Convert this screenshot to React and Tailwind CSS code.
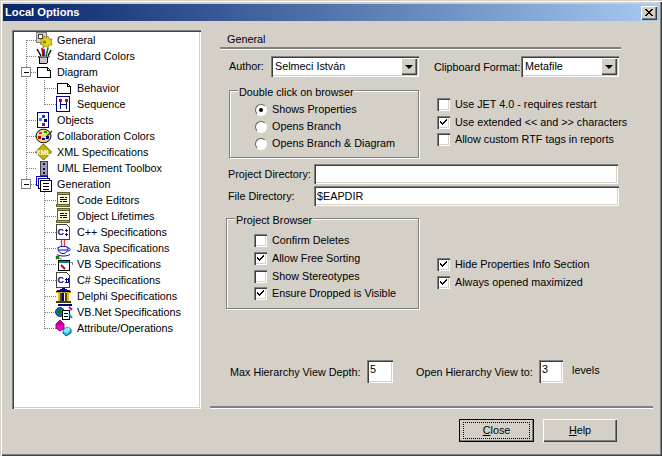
import React from 'react'

const sunken = 'bg-white shadow-[inset_1px_1px_0_#808080,inset_2px_2px_0_#404040,inset_-1px_-1px_0_#ffffff,inset_-2px_-2px_0_#d4d0c8]'
const raised = 'bg-[#d4d0c8] shadow-[inset_1px_1px_0_#ffffff,inset_-1px_-1px_0_#404040,inset_-2px_-2px_0_#808080]'

// 16x16 tree icons
const Ico = ({ children }) => (
  <svg width="16" height="16" viewBox="0 0 16 16" shapeRendering="crispEdges" className="shrink-0 overflow-visible">{children}</svg>
)

const PageIcon = () => (
  <Ico><path d="M1.5 3.5h10l3 3v7h-13z M11.5 3.5v3h3" fill="#fff" stroke="#000" /></Ico>
)

const icons = {
  general: (
    <Ico>
      <rect x="0.5" y="0.5" width="10" height="10" fill="#d4d0c8" stroke="#808080" />
      <rect x="2.500" y="2.500" width="4" height="4" fill="#fff" stroke="#404040" />
      <g transform="translate(0 3)">
        <path d="M8 1l2 2 2-2 1 3 3 0-1 3 1 3-3 0-1 3-2-2-3 2 0-3-3-1 2-2-2-3 3 0z" fill="#e6d020" stroke="#808000" strokeWidth="0.7" shapeRendering="auto" />
        <circle cx="8.5" cy="7" r="1.6" fill="#808000" shapeRendering="auto" />
      </g>
    </Ico>
  ),
  colors: (
    <Ico>
      <path d="M3 8.5h9l-1 7h-7z" fill="#c8c8c8" stroke="#000" />
      <path d="M2 8v1h11v-1z" fill="#fff" stroke="#000" strokeWidth="0.5" />
      <path d="M1 1l4 7" stroke="#000" strokeWidth="1.4" shapeRendering="auto" />
      <path d="M6 0l1 8" stroke="#d00000" strokeWidth="1.6" shapeRendering="auto" />
      <path d="M8 1v7" stroke="#0000c0" strokeWidth="1.6" shapeRendering="auto" />
      <path d="M12 0l-2 8" stroke="#008000" strokeWidth="1.6" shapeRendering="auto" />
      <path d="M15 2l-3 6" stroke="#000" strokeWidth="1.4" shapeRendering="auto" />
    </Ico>
  ),
  page: <PageIcon />,
  sequence: (
    <Ico>
      <rect x="0.5" y="0.5" width="13" height="15" fill="#fff" stroke="#000080" />
      <path d="M4 4v9M10 4v9M4 8h6" stroke="#000080" fill="none" />
      <rect x="3" y="3" width="3" height="3" fill="#d00000" />
      <rect x="9" y="3" width="3" height="3" fill="#d00000" />
    </Ico>
  ),
  objects: (
    <Ico>
      <rect x="1.5" y="0.5" width="11" height="15" fill="#fff" stroke="#000080" />
      <rect x="6" y="3" width="3" height="3" fill="#2040c0" />
      <rect x="3" y="6" width="3" height="3" fill="#4080e0" />
      <rect x="8" y="7" width="3" height="3" fill="#000080" />
      <rect x="6" y="11" width="3" height="3" fill="#a00080" />
    </Ico>
  ),
  palette: (
    <Ico>
      <ellipse cx="7.5" cy="8" rx="7.5" ry="6.8" fill="#e8e070" stroke="#000" shapeRendering="auto" />
      <rect x="3" y="4" width="3" height="2" fill="#ff00ff" />
      <rect x="8" y="3" width="3" height="2" fill="#00a000" />
      <rect x="2" y="8" width="3" height="3" fill="#d00000" />
      <rect x="6" y="10" width="3" height="2" fill="#0000e0" />
      <rect x="10" y="8" width="3" height="3" fill="#000080" />
      <path d="M16 3l-5 5" stroke="#404040" strokeWidth="1.5" shapeRendering="auto" />
    </Ico>
  ),
  xml: (
    <Ico>
      <path d="M7.5 0L15.5 8 7.5 16-.5 8z" fill="#c8b400" stroke="#606000" shapeRendering="auto" />
      <text x="7.5" y="10.5" textAnchor="middle" fontSize="7" fontWeight="700" fontFamily="Liberation Sans, sans-serif" fill="#fff">XML</text>
    </Ico>
  ),
  uml: (
    <Ico>
      <rect x="4.5" y="1.5" width="7" height="14" fill="#a0a0a8" stroke="#404040" />
      <rect x="7" y="3" width="2" height="2" fill="#000080" />
      <rect x="7" y="8" width="2" height="2" fill="#000080" />
      <rect x="7" y="12" width="2" height="2" fill="#000080" />
    </Ico>
  ),
  generation: (
    <Ico>
      <rect x="0.5" y="0.5" width="11" height="9" fill="#fff" stroke="#0000c0" />
      <rect x="2.5" y="2.5" width="11" height="10" fill="#fff" stroke="#000080" />
      <rect x="4.5" y="4.5" width="11" height="11" fill="#fff" stroke="#000" />
      <path d="M7 7h6M7 10h6M7 13h6" stroke="#000" />
    </Ico>
  ),
  code: (
    <Ico>
      <rect x="1.5" y="0.5" width="12" height="2" fill="#a8a860" stroke="#606030" />
      <rect x="1.5" y="2.5" width="12" height="10" fill="#ffffd8" stroke="#606030" />
      <path d="M4 5h4M9 5h2M4 7h7M4 9h2M7 9h4" stroke="#000" />
      <rect x="0.5" y="12.5" width="13" height="2" fill="#a8a860" stroke="#606030" />
    </Ico>
  ),
  cpp: (
    <Ico>
      <path d="M0.5 0.5h10l3 3v12h-13z" fill="#fff" stroke="#404040" />
      <text x="1.5" y="11" fontSize="9" fontWeight="700" fontFamily="Liberation Sans, sans-serif" fill="#000080">C</text>
      <path d="M9 6h3M10 5v3M9 10h3M10 9v3" stroke="#000080" />
    </Ico>
  ),
  java: (
    <Ico>
      <g transform="translate(0 2)">
        <path d="M6-2l-1 2 1 2-1 2M9-2l-1 2 1 2-1 2" fill="none" stroke="#e00000" shapeRendering="auto" />
        <path d="M2 5.5c3-1.500 8-1.500 10 0 0 4-2 6-5 6s-5-2-5-6z" fill="#fff" stroke="#0000c0" shapeRendering="auto" />
        <path d="M3 8h8M12 6c3 0 3 3 0 3M1 12.500c3 2 10 2 13 0" fill="none" stroke="#0000c0" shapeRendering="auto" />
      </g>
    </Ico>
  ),
  vb: (
    <Ico>
      <rect x="2.5" y="4.500" width="11" height="10" fill="#fff" stroke="#000" />
      <rect x="3" y="5" width="10" height="2" fill="#008080" />
      <path d="M0 0l3 3M3 0l-3 3" stroke="#006000" strokeWidth="1.500" shapeRendering="auto" />
      <path d="M3 1l3 3" stroke="#c0c000" strokeWidth="1.500" shapeRendering="auto" />
      <path d="M5 9l4 4" stroke="#d00000" strokeWidth="2" shapeRendering="auto" />
      <path d="M14 6l2 0v3" stroke="#808080" fill="none" />
    </Ico>
  ),
  csharp: (
    <Ico>
      <path d="M0.5 0.5h10l3 3v12h-13z" fill="#fff" stroke="#404040" />
      <text x="1.5" y="11" fontSize="9" fontWeight="700" fontFamily="Liberation Sans, sans-serif" fill="#000080">C</text>
      <path d="M9 7h4M9 10h4M10 6v5M12 6v5" stroke="#000080" />
    </Ico>
  ),
  delphi: (
    <Ico>
      <path d="M0 3L7.500 0 15 3v1H0z" fill="#000080" />
      <rect x="0" y="4" width="15" height="1" fill="#c8a000" />
      <rect x="2" y="5" width="2" height="8" fill="#e0c020" />
      <rect x="6" y="5" width="2" height="8" fill="#000080" />
      <rect x="11" y="5" width="2" height="8" fill="#e0c020" />
      <rect x="4" y="5" width="2" height="8" fill="#604000" />
      <rect x="9" y="5" width="2" height="8" fill="#604000" />
      <rect x="0" y="13" width="15" height="2" fill="#404000" />
    </Ico>
  ),
  vbnet: (
    <Ico>
      <rect x="2" y="0" width="14" height="2" fill="#000080" />
      <circle cx="4" cy="8" r="4.500" fill="#2060c0" stroke="#004080" shapeRendering="auto" />
      <path d="M2 6h3v3H2z" fill="#008000" />
      <rect x="6.500" y="6.500" width="7" height="9" fill="#fff" stroke="#000" />
      <path d="M8 9h4M8 12h4" stroke="#000" />
      <path d="M13 3l3 3" stroke="#c000c0" strokeWidth="2" shapeRendering="auto" />
      <path d="M13 10l3 4" stroke="#00a0a0" strokeWidth="2" shapeRendering="auto" />
    </Ico>
  ),
  attr: (
    <Ico>
      <g transform="translate(0 1)">
        <path d="M4-1L8 3 8 7 4 10 0 7 0 3z" fill="#ff00c0" stroke="#800060" shapeRendering="auto" />
        <path d="M4-1L8 3 4 6 0 3z" fill="#c000a0" shapeRendering="auto" />
        <path d="M11 6l4 2v4l-5 3-3-3v-3z" fill="#30b8e8" stroke="#006080" shapeRendering="auto" />
        <path d="M11 6l4 2-4 4-4-2z" fill="#90e8ff" shapeRendering="auto" />
      </g>
    </Ico>
  ),
}

const tree = [
  { label: 'General', icon: 'general' },
  { label: 'Standard Colors', icon: 'colors' },
  { label: 'Diagram', icon: 'page', box: true },
  { label: 'Behavior', icon: 'page', sub: true },
  { label: 'Sequence', icon: 'sequence', sub: true, lastSub: true },
  { label: 'Objects', icon: 'objects' },
  { label: 'Collaboration Colors', icon: 'palette' },
  { label: 'XML Specifications', icon: 'xml' },
  { label: 'UML Element Toolbox', icon: 'uml' },
  { label: 'Generation', icon: 'generation', box: true, last: true },
  { label: 'Code Editors', icon: 'code', sub: true, noMain: true },
  { label: 'Object Lifetimes', icon: 'code', sub: true, noMain: true },
  { label: 'C++ Specifications', icon: 'cpp', sub: true, noMain: true },
  { label: 'Java Specifications', icon: 'java', sub: true, noMain: true },
  { label: 'VB Specifications', icon: 'vb', sub: true, noMain: true },
  { label: 'C# Specifications', icon: 'csharp', sub: true, noMain: true },
  { label: 'Delphi Specifications', icon: 'delphi', sub: true, noMain: true },
  { label: 'VB.Net Specifications', icon: 'vbnet', sub: true, noMain: true },
  { label: 'Attribute/Operations', icon: 'attr', sub: true, noMain: true, lastSub: true },
]

const dots = { stroke: '#808080', strokeDasharray: '1 1', fill: 'none' }

function TreeRow({ item, index }) {
  const width = item.sub ? 42 : 22
  return (
    <div className="flex h-4 items-center">
      <svg width={width} height="16" shapeRendering="crispEdges" className="shrink-0">
        {!item.noMain && (
          <path d={item.last ? 'M12.500 0v8' : index === 0 ? 'M12.500 8v8' : 'M12.500 0v16'} {...dots} />
        )}
        {item.sub ? (
          <>
            <path d={item.lastSub ? 'M30.500 0v8.500' : 'M30.500 0v16'} {...dots} />
            <path d="M31 8.500h11" {...dots} />
          </>
        ) : (
          <path d="M13 8.500h9" {...dots} />
        )}
        {item.box && (
          <>
            <rect x="7.500" y="3.500" width="9" height="9" fill="#fff" stroke="#808080" />
            <path d="M10 8.500h5" stroke="#000" />
          </>
        )}
      </svg>
      {icons[item.icon]}
      <span className="ml-[5px] whitespace-nowrap">{item.label}</span>
    </div>
  )
}

function Combo({ value, className }) {
  return (
    <div className={`${sunken} flex h-[21px] items-center p-[2px] ${className}`}>
      <span className="flex-1 pl-[2px]">{value}</span>
      <div className={`${raised} flex h-[17px] w-4 items-center justify-center`}>
        <div className="h-0 w-0 border-x-[4px] border-t-[4px] border-x-transparent border-t-black" />
      </div>
    </div>
  )
}

function Check({ label, checked, className = '' }) {
  return (
    <div className={`flex h-[17px] items-center ${className}`}>
      <div className={`${sunken} flex h-[13px] w-[13px] shrink-0 items-center justify-center`}>
        {checked && (
          <svg width="7" height="7" viewBox="0 0 7 7" shapeRendering="crispEdges"><path d="M0 2h1v1h1v1h1V3h1V2h1V1h1V0h1v2H6v1H5v1H4v1H3v1H2V5H1V4H0z" /></svg>
        )}
      </div>
      <span className="ml-[5px] whitespace-nowrap">{label}</span>
    </div>
  )
}

function Radio({ label, checked, className = '' }) {
  return (
    <div className={`flex h-[17px] items-center ${className}`}>
      <div className="flex h-3 w-3 shrink-0 items-center justify-center rounded-full border border-t-[#606060] border-l-[#606060] border-r-white border-b-white bg-white">
        {checked && <div className="h-1 w-1 rounded-full bg-black" />}
      </div>
      <span className="ml-[5px] whitespace-nowrap">{label}</span>
    </div>
  )
}

function Group({ title, className, children }) {
  return (
    <div className={`relative border border-[#808080] shadow-[1px_1px_0_#ffffff,inset_1px_1px_0_#ffffff] ${className}`}>
      <span className="absolute top-[-6px] left-2 bg-[#d4d0c8] px-[1px] leading-[14px] whitespace-nowrap">{title}</span>
      {children}
    </div>
  )
}

function Button({ label, focused }) {
  const [first, ...rest] = label
  return (
    <div className={`${raised} flex h-[23px] items-center justify-center ${focused ? 'w-[75px] outline outline-1 -outline-offset-1 outline-black' : 'w-[74px]'}`}>
      <span className={`${focused ? 'flex h-[17px] w-[67px] items-center justify-center border border-dotted border-black' : ''}`}>
        <span className="underline">{first}</span>{rest.join('')}
      </span>
    </div>
  )
}

export default function App() {
  return (
    <div className="h-[456px] w-[662px] overflow-hidden bg-[#d4d0c8] p-[4px] font-['Liberation_Sans',sans-serif] text-[10.800px] leading-none text-black shadow-[inset_1px_1px_0_#d4d0c8,inset_2px_2px_0_#ffffff,inset_-1px_-1px_0_#404040,inset_-2px_-2px_0_#808080]">
      {/* title bar */}
      <div className="-mx-px flex h-[17px] items-center justify-between bg-gradient-to-r from-[#0a246a] to-[#a6caf0] pr-[2px] pl-[2px]">
        <span className="text-[11.200px] font-bold text-white">Local Options</span>
        <div className={`${raised} flex h-[14px] w-4 items-center justify-center`}>
          <svg width="8" height="7" viewBox="0 0 8 7" shapeRendering="crispEdges"><path d="M0 0h2v1h1v1h2V1h1V0h2v1H7v1H6v1H5v1h1v1h1v1h1v1H6V6H5V5H3v1H2v1H0V6h1V5h1V4h1V3H2V2H1V1H0z" /></svg>
        </div>
      </div>

      <div className="flex">
        {/* tree */}
        <div className={`${sunken} mt-[9px] ml-2 h-[379px] w-[189px] shrink-0 pt-[2px] pl-[2px]`}>
          {tree.map((item, i) => <TreeRow key={item.label} item={item} index={i} />)}
        </div>

        {/* options */}
        <div className="ml-[9px] flex w-[443px] flex-col">
          <div className="ml-[10px] flex h-[28px] w-[401px] items-end border-b-2 border-b-[#808080] pb-[2px] pl-[7px] shadow-[0_1px_0_#ffffff]">General</div>

          <div className="mt-[7px] flex h-[21px] items-center">
            <span className="ml-[19px] w-[42px]">Author:</span>
            <Combo value="Selmeci István" className="w-[148px]" />
            <span className="mt-[2px] ml-[15px] w-[87px] whitespace-nowrap">Clipboard Format:</span>
            <Combo value="Metafile" className="w-[98px]" />
          </div>

          <div className="mt-[13px] flex h-[68px]">
            <Group title="Double click on browser" className="ml-[19px] w-[190px] pt-[10px] pl-[25px]">
              <Radio label="Shows Properties" checked />
              <Radio label="Opens Branch" />
              <Radio label="Opens Branch  & Diagram" />
            </Group>
            <div className="mt-[6px] ml-[18px] flex flex-col">
              <Check label="Use JET 4.0 - requires restart" />
              <Check label="Use extended << and >> characters" checked className="mt-[1px]" />
              <Check label="Allow custom RTF tags in reports" />
            </div>
          </div>

          <div className="mt-[6px] flex h-[20px] items-center">
            <span className="ml-[18px] w-[86px] whitespace-nowrap">Project Directory:</span>
            <div className={`${sunken} h-[20px] w-[304px]`} />
          </div>
          <div className="mt-[2px] flex h-[20px] items-center">
            <span className="ml-[18px] w-[86px] whitespace-nowrap">File Directory:</span>
            <div className={`${sunken} flex h-[20px] w-[305px] items-center pl-[3px]`}>$EAPDIR</div>
          </div>

          <div className="mt-[12px] flex h-[91px]">
            <Group title="Project Browser" className="ml-[16px] w-[193px] pt-[13px] pl-[27px]">
              <Check label="Confirm Deletes" />
              <Check label="Allow Free Sorting" checked className="mt-[1px]" />
              <Check label="Show Stereotypes" className="mt-[1px]" />
              <Check label="Ensure Dropped is Visible" checked />
            </Group>
            <div className="mt-[38px] ml-[18px] flex flex-col">
              <Check label="Hide Properties Info Section" checked />
              <Check label="Always opened maximized" checked className="mt-[1px]" />
            </div>
          </div>

          <div className="mt-[51px] flex h-[23px] items-center">
            <span className="mt-[2px] ml-[20px] w-[137px] whitespace-nowrap">Max Hierarchy View Depth:</span>
            <div className={`${sunken} h-[23px] w-[26px] pt-[4px] pl-[3px]`}>5</div>
            <span className="mt-[2px] ml-[23px] w-[123px] whitespace-nowrap">Open Hierarchy View to:</span>
            <div className={`${sunken} h-[23px] w-[24px] pt-[4px] pl-[3px]`}>3</div>
            <span className="mb-[2px] ml-[9px]">levels</span>
          </div>

          <div className="mt-[23px] h-[2px] bg-[#808080] shadow-[0_1px_0_#ffffff]" />

          <div className="mt-[11px] flex">
            <div className="ml-[249px]"><Button label="Close" focused /></div>
            <div className="ml-[9px]"><Button label="Help" /></div>
          </div>
        </div>
      </div>
    </div>
  )
}
